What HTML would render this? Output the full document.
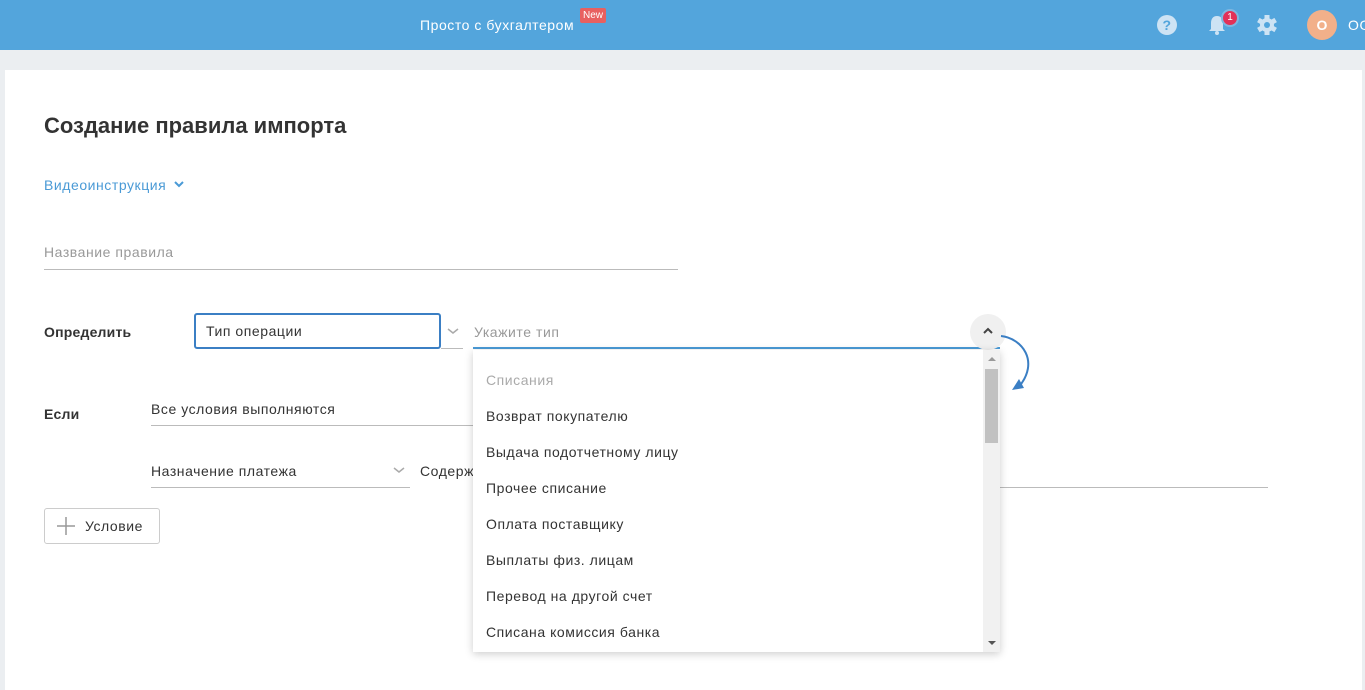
<!DOCTYPE html>
<html><head><meta charset="utf-8"><style>
*{box-sizing:border-box;margin:0;padding:0}
body{width:1365px;height:680px;overflow:hidden;background:#ebeef1;font-family:"Liberation Sans",sans-serif;color:#333;position:relative;letter-spacing:.55px}
.hdr{position:absolute;left:0;top:0;width:1365px;height:50px;background:#53a5dc}
.abs{position:absolute}
.card{position:absolute;left:5px;top:70px;width:1357px;height:620px;background:#fff}
.lbl{font-size:14px;font-weight:bold;color:#333;letter-spacing:.2px}
.line{position:absolute;height:1px;background:#bbb}
.item{position:absolute;left:13px;font-size:14px;color:#333}
</style></head><body>
<div class="hdr">
 <div class="abs" style="left:420px;top:17px;color:#fff;font-size:14px">Просто с бухгалтером</div>
 <div class="abs" style="left:580px;top:8px;background:#e86060;color:#fff;font-size:10px;padding:2px 3px;border-radius:2px;letter-spacing:0">New</div>
 <svg class="abs" style="left:1156px;top:14px" width="22" height="22"><circle cx="11" cy="11" r="10" fill="#cde3f4"/><text x="11" y="16" font-size="14" font-weight="bold" text-anchor="middle" fill="#53a5dc" font-family="Liberation Sans">?</text></svg>
 <svg class="abs" style="left:1206px;top:13px" width="22" height="24"><path d="M11 3c-4 0-6 3-6 7v6l-2 2h16l-2-2v-6c0-4-2-7-6-7z" fill="#cde3f4"/><circle cx="11" cy="20" r="2" fill="#cde3f4"/></svg>
 <div class="abs" style="left:1221px;top:9px;width:18px;height:18px;border-radius:50%;background:#e23058;border:2px solid #7fb7e0;color:#fff;font-size:10px;text-align:center;line-height:14px;letter-spacing:0">1</div>
 <svg class="abs" style="left:1256px;top:14px" width="22" height="22"><g fill="#cde3f4" transform="translate(11 11)"><rect x="-2.5" y="-10" width="5" height="20"/><rect x="-2.5" y="-10" width="5" height="20" transform="rotate(60)"/><rect x="-2.5" y="-10" width="5" height="20" transform="rotate(120)"/><circle r="7"/></g><circle cx="11" cy="11" r="3" fill="#53a5dc"/></svg>
 <div class="abs" style="left:1307px;top:10px;width:30px;height:30px;border-radius:50%;background:#f2b08a;color:#fff;font-weight:bold;font-size:14px;text-align:center;line-height:30px;letter-spacing:0">О</div>
 <div class="abs" style="left:1348px;top:17px;color:#fff;font-size:14px">ОО</div>
</div>
<div class="card"></div>
<div class="abs" style="left:44px;top:113px;font-size:22px;color:#333;font-weight:bold;letter-spacing:0">Создание правила импорта</div>
<div class="abs" style="left:44px;top:177px;font-size:14px;color:#4a9ad6">Видеоинструкция</div>
<svg class="abs" style="left:174px;top:180px" width="10" height="8"><path d="M1 2l4 4 4-4" stroke="#4a9ad6" stroke-width="2" fill="none"/></svg>
<div class="abs" style="left:44px;top:244px;font-size:14px;color:#999">Название правила</div>
<div class="line" style="left:44px;top:269px;width:634px"></div>
<div class="abs lbl" style="left:44px;top:324px">Определить</div>
<div class="abs" style="left:194px;top:313px;width:247px;height:36px;border:2px solid #3b7fc4;border-radius:3px;font-size:14px;padding:8px 10px">Тип операции</div>
<div class="line" style="left:441px;top:348px;width:22px"></div>
<svg class="abs" style="left:447px;top:326px" width="12" height="10"><path d="M1 3l5 4 5-4" stroke="#aaa" stroke-width="1.5" fill="none"/></svg>
<div class="abs" style="left:474px;top:324px;font-size:14px;color:#999">Укажите тип</div>
<div class="abs" style="left:473px;top:347px;width:527px;height:2px;background:#4a9ad6"></div>
<div class="abs" style="left:970px;top:314px;width:36px;height:36px;border-radius:50%;background:#f0f0f0"></div>
<svg class="abs" style="left:982px;top:326px" width="12" height="10"><path d="M2 7l4-4 4 4" stroke="#444" stroke-width="2" fill="none"/></svg>
<svg class="abs" style="left:998px;top:330px" width="40" height="65"><path d="M3 6c20 2 40 25 17 52" stroke="#3b7fc4" stroke-width="2" fill="none"/><path d="M14 60l12-2-5-9z" fill="#3b7fc4"/></svg>
<div class="abs lbl" style="left:44px;top:406px">Если</div>
<div class="abs" style="left:151px;top:401px;font-size:14px">Все условия выполняются</div>
<div class="line" style="left:151px;top:425px;width:322px"></div>
<div class="abs" style="left:151px;top:463px;font-size:14px">Назначение платежа</div>
<svg class="abs" style="left:393px;top:465px" width="12" height="10"><path d="M1 3l5 4 5-4" stroke="#aaa" stroke-width="1.5" fill="none"/></svg>
<div class="line" style="left:151px;top:487px;width:259px"></div>
<div class="abs" style="left:420px;top:463px;font-size:14px">Содерж</div>
<div class="line" style="left:1000px;top:487px;width:268px"></div>
<div class="abs" style="left:44px;top:508px;width:116px;height:36px;border:1px solid #ccc;border-radius:3px;font-size:14px;padding:9px 0 0 40px">Условие</div>
<svg class="abs" style="left:56px;top:516px" width="20" height="20"><path d="M10 1v18M1 10h18" stroke="#999" stroke-width="1.5"/></svg>
<div class="abs" style="left:473px;top:350px;width:527px;height:302px;background:#fff;box-shadow:0 2px 8px rgba(0,0,0,.2);overflow:hidden">
 <div class="item" style="top:22px;color:#aaa">Списания</div>
 <div class="item" style="top:58px">Возврат покупателю</div>
 <div class="item" style="top:94px">Выдача подотчетному лицу</div>
 <div class="item" style="top:130px">Прочее списание</div>
 <div class="item" style="top:166px">Оплата поставщику</div>
 <div class="item" style="top:202px">Выплаты физ. лицам</div>
 <div class="item" style="top:238px">Перевод на другой счет</div>
 <div class="item" style="top:274px">Списана комиссия банка</div>
 <div class="abs" style="left:510px;top:0;width:17px;height:302px;background:#f1f1f1"></div>
 <div class="abs" style="left:512px;top:19px;width:13px;height:74px;background:#c1c1c1"></div>
 <svg class="abs" style="left:514px;top:5px" width="10" height="8"><path d="M1 6l4-4 4 4z" fill="#999"/></svg>
 <svg class="abs" style="left:514px;top:289px" width="10" height="8"><path d="M1 2l4 4 4-4z" fill="#555"/></svg>
</div>
</body></html>
